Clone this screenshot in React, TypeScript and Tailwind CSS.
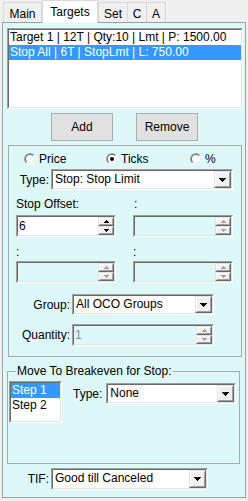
import React from 'react';

const LIST_ITEMS = [
  'Target 1 | 12T | Qty:10 | Lmt | P: 1500.00',
  'Stop All | 6T | StopLmt | L: 750.00',
];

type Box = { className?: string; inner?: string; children?: React.ReactNode };

// classic 3D sunken border (listbox, combo, numeric up/down)
function Sunken({ className = '', inner = '', children }: Box) {
  return (
    <div className={`border border-t-[#a0a0a0] border-l-[#a0a0a0] border-r-white border-b-white ${className}`}>
      <div className={`h-full w-full border border-t-[#696969] border-l-[#696969] border-r-[#e3e3e3] border-b-[#e3e3e3] ${inner}`}>
        {children}
      </div>
    </div>
  );
}

function Raised({ className = '', children }: Box) {
  return (
    <div className={`border border-t-[#e3e3e3] border-l-[#e3e3e3] border-r-[#696969] border-b-[#696969] bg-[#f0f0f0] ${className}`}>
      <div className="flex h-full w-full items-center justify-center border border-t-white border-l-white border-r-[#a0a0a0] border-b-[#a0a0a0]">
        {children}
      </div>
    </div>
  );
}

const ArrowDown = () => (
  <svg width="7" height="4" viewBox="0 0 7 4" fill="#000">
    <path d="M0 0h7v1H0zM1 1h5v1H1zM2 2h3v1H2zM3 3h1v1H3z" />
  </svg>
);

const Tiny = ({ up, off }: { up?: boolean; off?: boolean }) => (
  <svg width="5" height="3" viewBox="0 0 5 3" fill={off ? '#a0a0a0' : '#000'}>
    {up ? <path d="M2 0h1v1H2zM1 1h3v1H1zM0 2h5v1H0z" /> : <path d="M0 0h5v1H0zM1 1h3v1H1zM2 2h1v1H2z" />}
  </svg>
);

function Combo({ className = '', text }: { className?: string; text: string }) {
  return (
    <Sunken className={`bg-white ${className}`} inner="flex">
      <div className="flex-1 overflow-hidden whitespace-nowrap pl-[2px] leading-[17px]">{text}</div>
      <Raised className="h-full w-[17px]">
        <ArrowDown />
      </Raised>
    </Sunken>
  );
}

function Spin({ className = '', value = '', off }: { className?: string; value?: string; off?: boolean }) {
  return (
    <Sunken className={`h-[22px] ${off ? '' : 'bg-white'} ${className}`} inner="flex">
      <div className={`flex-1 pl-[1px] leading-[18px] ${off ? 'text-[#8a8a8a]' : ''}`}>{value}</div>
      <div className="flex w-[16px] flex-col">
        <Raised className="h-[9px]">
          <Tiny up off={off} />
        </Raised>
        <Raised className="h-[9px]">
          <Tiny off={off} />
        </Raised>
      </div>
    </Sunken>
  );
}

function Radio({ checked, label }: { checked?: boolean; label: string }) {
  return (
    <div className="flex items-center gap-[3px]">
      <div className="h-[12px] w-[12px] rounded-full border border-t-[#a0a0a0] border-l-[#a0a0a0] border-r-white border-b-white">
        <div className="flex h-full w-full items-center justify-center rounded-full border border-t-[#696969] border-l-[#696969] border-r-[#e3e3e3] border-b-[#e3e3e3] bg-white">
          {checked && <div className="h-[4px] w-[4px] rounded-full bg-black" />}
        </div>
      </div>
      <span>{label}</span>
    </div>
  );
}

function Tab({ label, className = '' }: { label: string; className?: string }) {
  return (
    <div className={`h-[20px] border border-b-0 border-[#d9d9d9] bg-[#f0f0f0] pt-[4px] text-center leading-[14px] ${className}`}>
      {label}
    </div>
  );
}

export default function App() {
  return (
    <div className="h-[501px] w-[248px] overflow-hidden bg-[#f0f0f0] font-['Liberation_Sans',Arial,sans-serif] text-[12px] leading-[14px] text-black">
      {/* tab strip */}
      <div className="flex h-[22px] items-end pl-[3px]">
        <Tab label="Main" className="w-[39px]" />
        <div className="relative z-10 -mb-px h-[23px] w-[56px] border border-b-0 border-[#d9d9d9] bg-white pt-[4px] text-center leading-[14px]">
          Targets
        </div>
        <Tab label="Set" className="w-[30px]" />
        <Tab label="C" className="-ml-px w-[20px]" />
        <Tab label="A" className="-ml-px w-[20px]" />
      </div>

      {/* page */}
      <div className="mx-[2px] flex h-[476px] flex-col border border-[#a0a0a0] bg-[#dcf8f8]">
        <Sunken className="ml-[4px] mt-[5px] h-[81px] w-[236px] bg-white">
          {LIST_ITEMS.map((t, i) => (
            <div key={t} className={`whitespace-nowrap pl-[1px] leading-[15px] ${i === 1 ? 'bg-[#3399ff] text-white' : ''}`}>
              {t}
            </div>
          ))}
        </Sunken>

        <div className="mt-[4px] flex gap-[23px] pl-[48px]">
          <button className="h-[28px] w-[62px] border border-[#adadad] bg-[#e1e1e1]">Add</button>
          <button className="h-[28px] w-[62px] border border-[#adadad] bg-[#e1e1e1]">Remove</button>
        </div>

        {/* order settings group */}
        <div className="ml-[5px] mt-[4px] h-[212px] w-[234px] border border-[#a9a9a9]">
          <div className="mt-[5px] flex h-[15px] items-center">
            <div className="ml-[15px] w-[82px]">
              <Radio label="Price" />
            </div>
            <div className="w-[84px]">
              <Radio checked label="Ticks" />
            </div>
            <Radio label="%" />
          </div>

          <div className="mt-[3px] flex items-center">
            <div className="w-[40px] text-right">Type:</div>
            <Combo className="ml-[2px] h-[21px] w-[182px]" text="Stop: Stop Limit" />
          </div>

          <div className="mt-[7px] flex gap-[17px] pl-[7px]">
            <div className="w-[100px]">
              <div>Stop Offset:</div>
              <Spin className="mt-[4px]" value="6" />
              <div className="mt-[8px]">:</div>
              <Spin className="mt-[2px]" off />
            </div>
            <div className="w-[100px]">
              <div className="pl-[1px]">:</div>
              <Spin className="mt-[4px]" off />
              <div className="mt-[8px]">:</div>
              <Spin className="mt-[2px]" off />
            </div>
          </div>

          <div className="mt-[11px] flex items-center">
            <div className="w-[61px] text-right">Group:</div>
            <Combo className="ml-[2px] h-[21px] w-[142px]" text="All OCO Groups" />
          </div>

          <div className="mt-[9px] flex items-center">
            <div className="w-[61px] text-right">Quantity:</div>
            <Spin className="ml-[2px] w-[142px]" value="1" off />
          </div>
        </div>

        {/* breakeven group */}
        <fieldset className="ml-[4px] mt-[7px] h-[100px] w-[233px] border border-[#a9a9a9]">
          <legend className="ml-[8px] px-[1px] leading-[14px]">Move To Breakeven for Stop:</legend>
          <div className="mt-[3px] flex items-start">
            <Sunken className="ml-[1px] h-[42px] w-[53px] bg-white">
              <div className="bg-[#3399ff] pl-[1px] leading-[15px] text-white">Step 1</div>
              <div className="pl-[1px] leading-[15px]">Step 2</div>
            </Sunken>
            <div className="mt-[2px] flex items-center">
              <div className="ml-[11px]">Type:</div>
              <Combo className="ml-[4px] h-[21px] w-[130px]" text="None" />
            </div>
          </div>
        </fieldset>

        <div className="mt-[4px] flex items-center">
          <div className="w-[46px] text-right">TIF:</div>
          <Combo className="ml-[2px] h-[22px] w-[157px]" text="Good till Canceled" />
        </div>
      </div>
    </div>
  );
}
